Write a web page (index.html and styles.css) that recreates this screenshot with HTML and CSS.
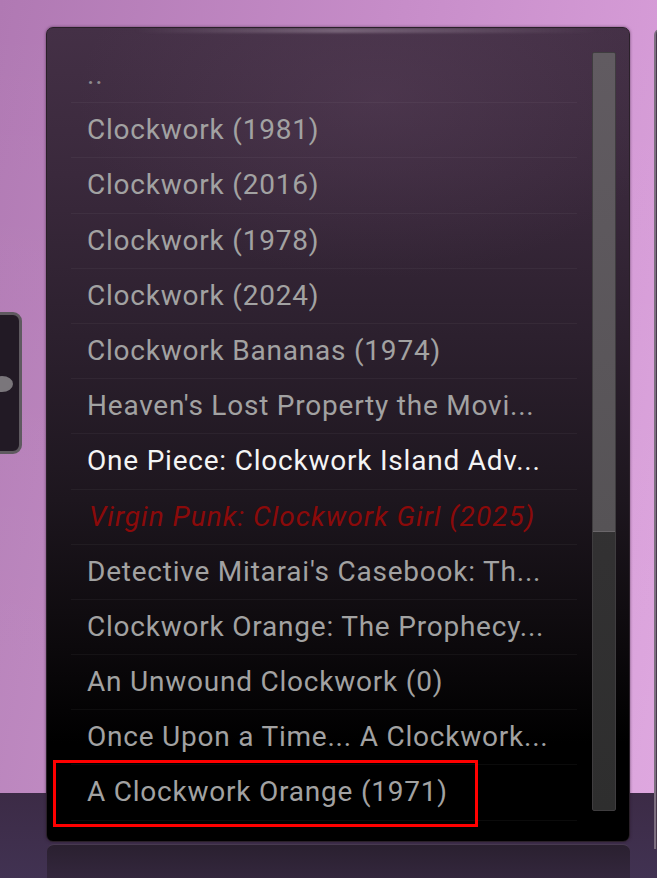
FILE: index.html
```html
<!DOCTYPE html>
<html>
<head>
<meta charset="utf-8">
<link rel="stylesheet" href="styles.css">
</head>
<body>
<div class="stage">
  <div class="side-tab"><span class="tab-knob"></span></div>
  <div class="next-panel"></div>
  <div class="panel">
    <div class="glow"></div>
    <ul class="list">
      <li class="row dim">..</li>
      <li class="row">Clockwork (1981)</li>
      <li class="row">Clockwork (2016)</li>
      <li class="row">Clockwork (1978)</li>
      <li class="row">Clockwork (2024)</li>
      <li class="row">Clockwork Bananas (1974)</li>
      <li class="row">Heaven's Lost Property the Movi...</li>
      <li class="row focus">One Piece: Clockwork Island Adv...</li>
      <li class="row alert">Virgin Punk: Clockwork Girl (2025)</li>
      <li class="row">Detective Mitarai's Casebook: Th...</li>
      <li class="row">Clockwork Orange: The Prophecy...</li>
      <li class="row">An Unwound Clockwork (0)</li>
      <li class="row">Once Upon a Time... A Clockwork...</li>
      <li class="row">A Clockwork Orange (1971)</li>
    </ul>
    <div class="scrollbar"><div class="thumb"></div></div>
    <div class="mark"></div>
  </div>
  <div class="reflection"></div>
</div>
</body>
</html>
```
FILE: styles.css
```css
html, body {
  margin: 0;
  padding: 0;
  width: 657px;
  height: 878px;
  overflow: hidden;
}
body {
  font-family: Roboto, "Liberation Sans", sans-serif;
  background:
    linear-gradient(to bottom, rgba(0,0,0,0) 0, rgba(0,0,0,0) 793px, #3c2b46 793px, #413252 878px),
    linear-gradient(to bottom, rgba(255,255,255,0) 0, rgba(255,255,255,0.06) 700px),
    linear-gradient(100deg, #b079b3 0%, #c78dc9 50%, #dda3de 100%);
}
.stage {
  position: relative;
  width: 657px;
  height: 878px;
  padding: 27px 0 0 46px;
  box-sizing: border-box;
  overflow: hidden;
}
.side-tab {
  position: absolute;
  left: -12px;
  top: 312px;
  width: 28px;
  height: 136px;
  background: #221a25;
  border: 3px solid #5f5a60;
  border-radius: 9px;
  filter: blur(0.6px);
}
.tab-knob {
  position: absolute;
  left: 0;
  top: 61px;
  width: 22px;
  height: 16px;
  border-radius: 50%;
  background: #7a767b;
}
.next-panel {
  position: absolute;
  left: 654px;
  top: 29px;
  width: 40px;
  height: 820px;
  background: #47374b;
  border-left: 2px solid #7d6f80;
  border-radius: 6px 0 0 0;
}
.panel {
  position: relative;
  display: flex;
  width: 584px;
  height: 815px;
  box-sizing: border-box;
  border: 1px solid #2a2029;
  border-radius: 7px;
  overflow: hidden;
  background:
    radial-gradient(ellipse 300px 180px at 330px 70px, rgba(110,80,110,0.25), rgba(110,80,110,0) 100%),
    linear-gradient(to bottom, #443046 0%, #3a293c 18%, #2c202e 38%, #1d161e 58%, #0c090c 76%, #000 88%, #000 100%);
  box-shadow: 0 0 3px rgba(40,20,40,0.6);
}
.glow {
  position: absolute;
  left: 0;
  right: 0;
  top: 0;
  height: 5px;
  background: linear-gradient(to right, rgba(255,255,255,0) 15%, rgba(200,185,200,0.35) 50%, rgba(255,255,255,0) 95%);
  filter: blur(1px);
}
.list {
  list-style: none;
  margin: 20px 0 0 24px;
  padding: 0;
  width: 506px;
}
.row {
  height: 54.2px;
  line-height: 54px;
  border-bottom: 1px solid rgba(255,255,255,0.045);
  padding-left: 16px;
  font-size: 28px;
  letter-spacing: 0.78px;
  color: #a2a2a2;
  white-space: nowrap;
  overflow: hidden;
}
.row.dim { color: #8e8a8e; }
.row.focus { color: #f4f4f4; }
.row.alert {
  color: #8b0a0a;
  font-style: italic;
  letter-spacing: 1px;
  padding-left: 18px;
}
.scrollbar {
  margin: 24px 0 0 15px;
  width: 24px;
  height: 759px;
  box-sizing: border-box;
  background: linear-gradient(to bottom, #3a373a, #2e2e2e);
  border: 1px solid #3f3d3f;
  border-radius: 2px;
  overflow: hidden;
}
.thumb {
  height: 478px;
  background: linear-gradient(to bottom, #615b61, #565356);
  border-bottom: 1px solid #6a666a;
}
.mark {
  position: absolute;
  left: 6px;
  top: 732px;
  width: 425px;
  height: 67px;
  box-sizing: border-box;
  border: 3px solid #ff0000;
}
.reflection {
  margin: 2px 0 0 1px;
  width: 583px;
  height: 40px;
  border-radius: 7px 7px 0 0;
  background: linear-gradient(to bottom, #2a2030, #35283f);
  border-top: 1px solid #4a3c52;
  box-sizing: border-box;
}
```
